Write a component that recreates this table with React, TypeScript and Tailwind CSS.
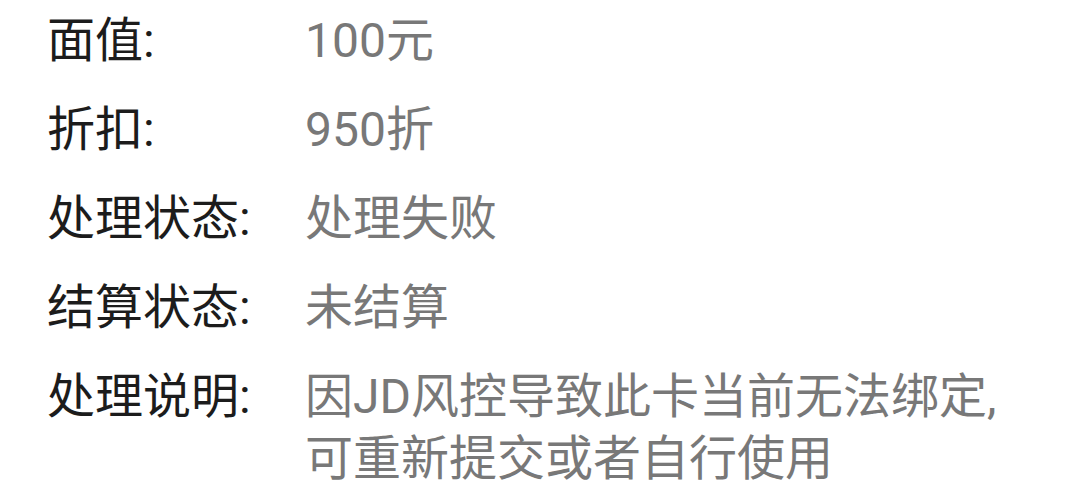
const rows: { label: string; value: string[] }[] = [
  { label: "面值:", value: ["100元"] },
  { label: "折扣:", value: ["950折"] },
  { label: "处理状态:", value: ["处理失败"] },
  { label: "结算状态:", value: ["未结算"] },
  { label: "处理说明:", value: ["因JD风控导致此卡当前无法绑定,", "可重新提交或者自行使用"] },
];

export default function App() {
  return (
    <div
      className="min-h-[497px] w-full bg-white pl-[47px]"
      style={{ fontFamily: "Roboto, 'Noto Sans CJK SC', sans-serif" }}
    >
      {rows.map((r) => (
        <div key={r.label} className="flex py-[13.5px] text-[48px] leading-[62px] first:pt-[9.5px]">
          <div className="w-[258px] shrink-0 text-[#1c1c1c]">{r.label}</div>
          <div className="text-[#787878]">
            {r.value.map((line) => (
              <div key={line}>{line}</div>
            ))}
          </div>
        </div>
      ))}
    </div>
  );
}
